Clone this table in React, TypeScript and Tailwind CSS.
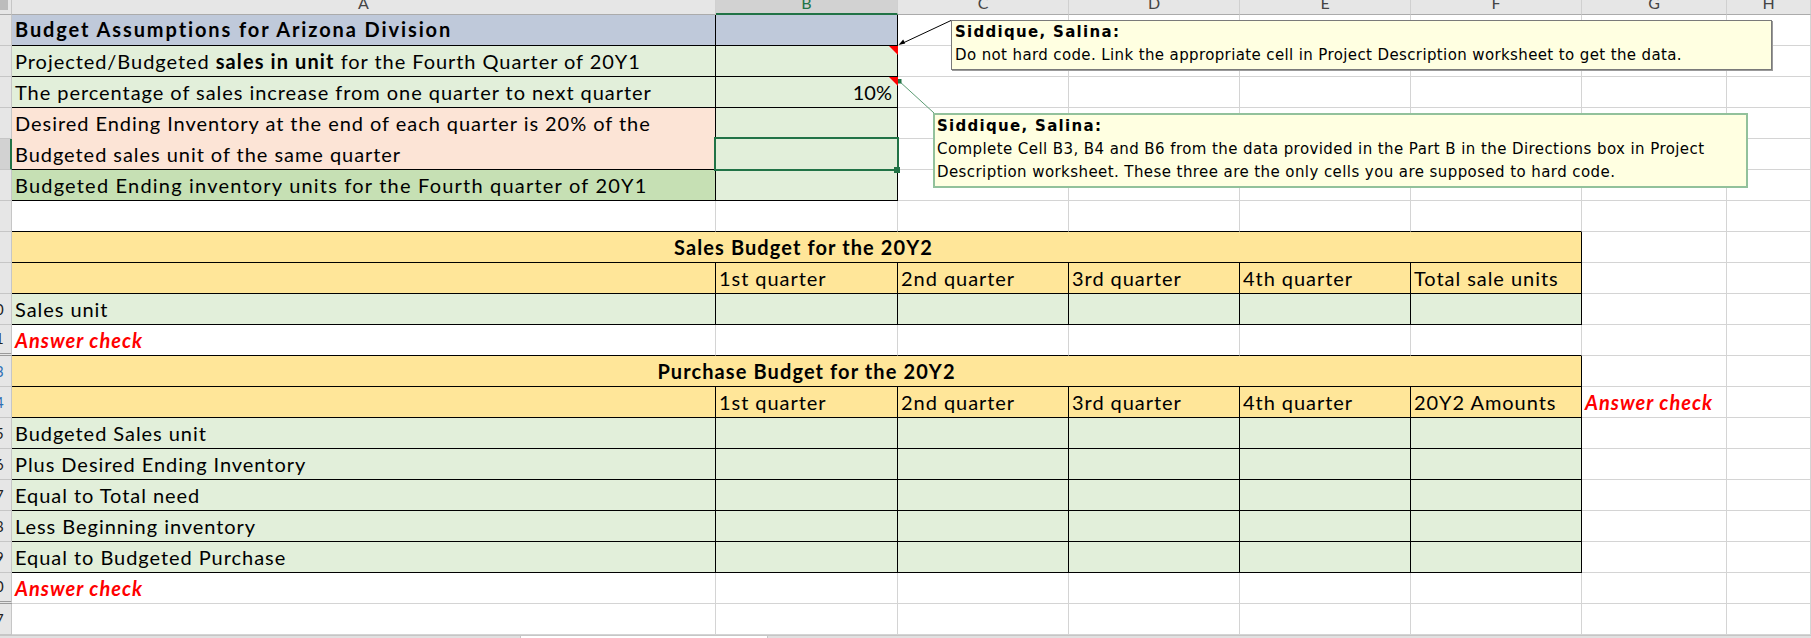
import type { ReactNode } from "react";
import { twMerge } from "tailwind-merge";

const GRID = "border-r border-b border-[#d4d4d4]";
const BOX = "border-r border-b border-black";
const BLUE = "bg-[#bfc9da]";
const GREEN = "bg-[#e2efda]";
const PEACH = "bg-[#fce4d6]";
const DGREEN = "bg-[#c6e0b4]";
const YELLOW = "bg-[#ffe699]";

const Cell = ({ children, className }: { children?: ReactNode; className?: string }) => (
  <div
    className={twMerge(
      "flex items-end overflow-hidden whitespace-nowrap bg-white pl-[3px] pb-[5px] leading-none",
      GRID,
      className
    )}
  >
    {children}
  </div>
);

// row numbers are centred in a wider header, only the right edge of it is on screen
const RowHead = ({ n, sel, blue, dbl }: { n: number; sel?: boolean; blue?: boolean; dbl?: boolean }) => (
  <div
    className={twMerge(
      "flex items-end overflow-hidden whitespace-nowrap border-r border-b border-[#c6c6c6] bg-[#e6e6e6] pb-[7px] text-[15px] leading-none tracking-normal text-[#222]",
      sel && "border-r-2 border-r-[#217346] bg-[#d2d2d2]",
      blue && "text-[#2f6fb5]",
      dbl && "border-b-[3px] border-double border-b-[#9a9a9a]"
    )}
  >
    <span className="-ml-[22px] w-[34px] shrink-0 text-center">{n}</span>
  </div>
);

const Blank = ({ count, className }: { count: number; className?: string }) => (
  <>
    {Array.from({ length: count }).map((_, i) => (
      <Cell key={i} className={className} />
    ))}
  </>
);

const AnswerCheck = () => (
  <span className="font-bold italic tracking-[1px] text-[#ff0000]">Answer check</span>
);

const quarters = ["1st quarter", "2nd quarter", "3rd quarter", "4th quarter"];
const purchaseRows = [
  "Budgeted Sales unit",
  "Plus Desired Ending Inventory",
  "Equal to Total need",
  "Less Beginning inventory",
  "Equal to Budgeted Purchase",
];

const Comments = () => (
  <>
    <svg className="pointer-events-none absolute left-0 top-0" width="1811" height="638">
      <line x1="951" y1="20.5" x2="903" y2="43" stroke="#000" strokeWidth="1" />
      <polygon points="898.5,45 905.2,43.6 903.2,39.4" fill="#000" />
      <line x1="899" y1="81" x2="934" y2="113" stroke="#5c9c74" strokeWidth="1" />
      <rect x="897" y="79" width="4.5" height="4.5" fill="#217346" />
      <polygon points="889,46 898,46 898,55" fill="#ff0000" />
      <polygon points="889,77 898,77 898,86" fill="#ff0000" />
    </svg>
    <div className="absolute left-[951px] top-[20px] h-[50px] w-[821px] border border-[#7a7a7a] bg-[#ffffe1] px-[3px] font-['DejaVu_Sans',sans-serif] text-[15px] leading-[23px] tracking-[0.38px] text-black shadow-[1px_1px_0_#9a9a9a]">
      <div className="font-bold tracking-[1.3px]">Siddique, Salina:</div>
      <div>Do not hard code. Link the appropriate cell in Project Description worksheet to get the data.</div>
    </div>
    <div className="absolute left-[933px] top-[113px] h-[75px] w-[815px] border-2 border-[#92c19b] bg-[#ffffe1] px-[2px] font-['DejaVu_Sans',sans-serif] text-[15px] leading-[23px] tracking-[0.42px] text-black">
      <div className="font-bold tracking-[1.3px]">Siddique, Salina:</div>
      <div>
        Complete Cell B3, B4 and B6 from the data provided in the Part B in the Directions box in Project
      </div>
      <div>Description worksheet. These three are the only cells you are supposed to hard code.</div>
    </div>
    <div className="absolute left-[714px] top-[137px] h-[34px] w-[185px] border-2 border-[#217346]" />
    <div className="absolute left-[894px] top-[167px] h-[6px] w-[6px] bg-[#217346]" />
  </>
);

export default function App() {
  return (
    <div className="relative h-[638px] w-[1811px] overflow-hidden bg-white font-['Lato',sans-serif] text-[20px] tracking-[0.95px] text-black">
      <div className="grid grid-cols-[12px_704px_182px_171px_171px_171px_171px_145px_1fr] grid-rows-[15px_repeat(20,31px)]">
        {/* column headers */}
        <div className="relative border-r border-b border-r-[#c6c6c6] border-b-[#ababab] bg-[#e6e6e6]">
          <div className="h-[10px] w-[8px] bg-[#bcbcbc]" />
        </div>
        {["A", "B", "C", "D", "E", "F", "G", "H"].map((c) => (
          <div
            key={c}
            className={twMerge(
              "flex items-end justify-center overflow-hidden border-r border-b border-r-[#d0d0d0] border-b-[#ababab] bg-[#e6e6e6] pb-[3px] text-[16px] leading-none tracking-normal text-[#444]",
              c === "B" && "border-b-2 border-b-[#217346] bg-[#d2d2d2] pb-[2px] text-[#217346]"
            )}
          >
            {c}
          </div>
        ))}

        {/* 1 */}
        <RowHead n={1} />
        <Cell className={twMerge(BOX, BLUE, "pb-[6px] font-bold tracking-[1.9px]")}>
          Budget Assumptions for Arizona Division
        </Cell>
        <Cell className={twMerge(BOX, BLUE)} />
        <Blank count={6} />

        {/* 2 */}
        <RowHead n={2} />
        <Cell className={twMerge(BOX, GREEN)}>
          <span>
            Projected/Budgeted <b className="tracking-[1.1px]">sales in unit</b> for the Fourth Quarter of 20Y1
          </span>
        </Cell>
        <Cell className={twMerge(BOX, GREEN)} />
        <Blank count={6} />

        {/* 3 */}
        <RowHead n={3} />
        <Cell className={twMerge(BOX, GREEN)}>The percentage of sales increase from one quarter to next quarter</Cell>
        <Cell className={twMerge(BOX, GREEN, "justify-end pr-[5px] tracking-normal")}>10%</Cell>
        <Blank count={6} />

        {/* 4-5 */}
        <RowHead n={4} />
        <Cell className={twMerge(BOX, PEACH, "row-span-2 flex-col items-start justify-end gap-[11px]")}>
          <div>Desired Ending Inventory at the end of each quarter is 20% of the</div>
          <div>Budgeted sales unit of the same quarter</div>
        </Cell>
        <Cell className={twMerge(BOX, GREEN)} />
        <Blank count={6} />
        <RowHead n={5} sel />
        <Cell className={twMerge(BOX, GREEN)} />
        <Blank count={6} />

        {/* 6 */}
        <RowHead n={6} />
        <Cell className={twMerge(BOX, DGREEN, "tracking-[1.2px]")}>
          Budgeted Ending inventory units for the Fourth quarter of 20Y1
        </Cell>
        <Cell className={twMerge(BOX, GREEN)} />
        <Blank count={6} />

        {/* 7 */}
        <RowHead n={7} />
        <Blank count={6} className="border-b-black" />
        <Blank count={2} />

        {/* 8 sales budget */}
        <RowHead n={8} />
        <Cell className={twMerge(BOX, YELLOW, "col-span-6 justify-center pl-[14px] font-bold tracking-[1.1px]")}>
          Sales Budget for the 20Y2
        </Cell>
        <Blank count={2} />

        <RowHead n={9} />
        <Cell className={twMerge(BOX, YELLOW)} />
        {[...quarters, "Total sale units"].map((q) => (
          <Cell key={q} className={twMerge(BOX, YELLOW)}>
            {q}
          </Cell>
        ))}
        <Blank count={2} />

        <RowHead n={10} />
        <Cell className={twMerge(BOX, GREEN)}>Sales unit</Cell>
        <Blank count={5} className={twMerge(BOX, GREEN)} />
        <Blank count={2} />

        <RowHead n={11} dbl />
        <Cell className="border-b-black">
          <AnswerCheck />
        </Cell>
        <Blank count={5} className="border-b-black" />
        <Blank count={2} />

        {/* purchase budget */}
        <RowHead n={13} blue />
        <Cell className={twMerge(BOX, YELLOW, "col-span-6 justify-center pl-[20px] font-bold tracking-[1.1px]")}>
          Purchase Budget for the 20Y2
        </Cell>
        <Blank count={2} />

        <RowHead n={14} blue />
        <Cell className={twMerge(BOX, YELLOW)} />
        {[...quarters, "20Y2 Amounts"].map((q) => (
          <Cell key={q} className={twMerge(BOX, YELLOW)}>
            {q}
          </Cell>
        ))}
        <Cell>
          <AnswerCheck />
        </Cell>
        <Blank count={1} />

        {purchaseRows.map((label, i) => (
          <div key={label} className="contents">
            <RowHead n={15 + i} />
            <Cell className={twMerge(BOX, GREEN)}>{label}</Cell>
            <Blank count={5} className={twMerge(BOX, GREEN)} />
            <Blank count={2} />
          </div>
        ))}

        <RowHead n={20} dbl />
        <Cell>
          <AnswerCheck />
        </Cell>
        <Blank count={7} />

        <RowHead n={27} />
        <Blank count={8} />
      </div>

      {/* sheet bar */}
      <div className="flex h-[3px] border-t border-[#c6c6c6]">
        <div className="w-[520px] bg-[#e1e1e1]" />
        <div className="w-[248px] border-x border-[#c6c6c6] bg-white" />
        <div className="flex-1 bg-[#e1e1e1]" />
      </div>

      <Comments />
    </div>
  );
}
